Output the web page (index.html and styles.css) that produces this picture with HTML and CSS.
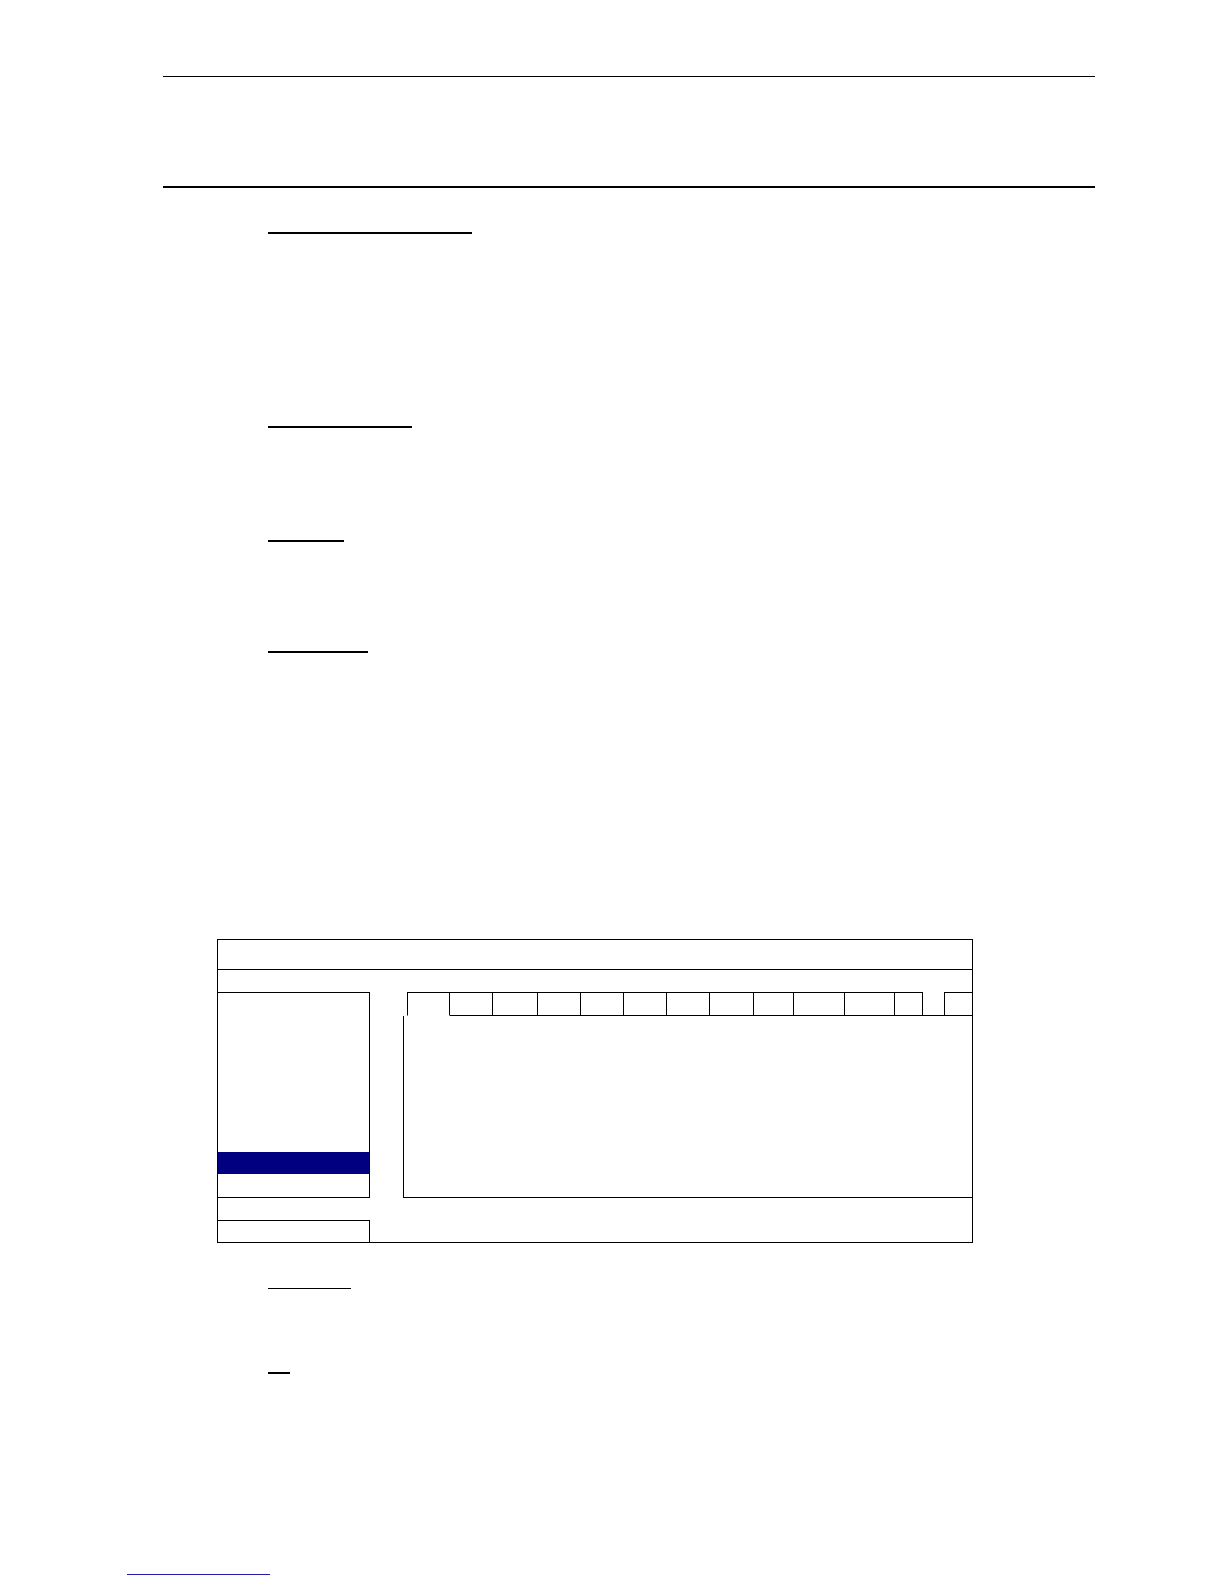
FILE: index.html
```html
<!DOCTYPE html>
<html lang="en">
<head>
<meta charset="utf-8">
<title>Manual page</title>
<link rel="stylesheet" href="styles.css">
</head>
<body>
<div class="page">
  <div class="header">
    <div class="rule-thin"></div>
    <div class="rule-thick"></div>
  </div>

  <div class="heading h1"></div>
  <div class="heading h2"></div>
  <div class="heading h3"></div>
  <div class="heading h4"></div>

  <div class="dialog">
    <div class="dlg-title"></div>
    <div class="dlg-gap"></div>
    <div class="dlg-row">
      <div class="menu-list">
        <div class="menu-item"></div>
        <div class="menu-item"></div>
        <div class="menu-item"></div>
        <div class="menu-item"></div>
        <div class="menu-item"></div>
        <div class="menu-item"></div>
        <div class="menu-item"></div>
        <div class="menu-item selected"></div>
        <div class="menu-item"></div>
      </div>
      <div class="right-col">
        <div class="tabs">
          <div class="tab active w43"></div>
          <div class="tab w43"></div>
          <div class="tab w45"></div>
          <div class="tab w43"></div>
          <div class="tab w43"></div>
          <div class="tab w43"></div>
          <div class="tab w43"></div>
          <div class="tab w44"></div>
          <div class="tab w40"></div>
          <div class="tab w51"></div>
          <div class="tab w50"></div>
          <div class="tab w28"></div>
          <div class="tab-gap"></div>
          <div class="tab last"></div>
        </div>
        <div class="panel"></div>
      </div>
    </div>
    <div class="dlg-gap"></div>
    <div class="dlg-footer">
      <div class="footer-box"></div>
    </div>
  </div>

  <div class="heading h5"></div>
  <div class="heading h6"></div>

  <div class="link-line"></div>
</div>
</body>
</html>
```

FILE: styles.css
```css
html, body {
  margin: 0;
  padding: 0;
  background: #ffffff;
  font-family: "Liberation Serif", serif;
}

.page {
  width: 1224px;
  height: 1584px;
  overflow: hidden;
}

.header {
  margin-left: 163px;
  width: 932px;
  padding-top: 76px;
}

.rule-thin {
  border-top: 1px solid #000;
}

.rule-thick {
  margin-top: 109px;
  border-top: 2px solid #000;
}

.heading {
  margin-left: 268px;
  border-top: 2px solid #000;
}

.h1 { margin-top: 44px; width: 204px; }
.h2 { margin-top: 192px; width: 144px; }
.h3 { margin-top: 112px; width: 76px; }
.h4 { margin-top: 109px; width: 100px; }
.h5 { margin-top: 45px; width: 83px; border-top-width: 1px; }
.h6 { margin-top: 83px; width: 22px; }

/* dialog */
.dialog {
  margin-top: 286px;
  margin-left: 217px;
  width: 754px;
  border: 1px solid #000;
  display: flex;
  flex-direction: column;
}

.dlg-title {
  height: 29px;
  border-bottom: 1px solid #000;
}

.dlg-gap {
  height: 22px;
}

.dlg-row {
  display: flex;
  gap: 33px;
  height: 206px;
}

.menu-list {
  width: 151px;
  border-top: 1px solid #000;
  border-right: 1px solid #000;
  border-bottom: 1px solid #000;
  padding-top: 5px;
  box-sizing: content-box;
  height: 199px;
  display: flex;
  flex-direction: column;
}

.menu-item {
  height: 22px;
  flex: none;
}

.menu-item.selected {
  background: #000080;
}

.right-col {
  width: 569px;
  display: flex;
  flex-direction: column;
}

.tabs {
  display: flex;
  padding-left: 4px;
  height: 24px;
}

.tab {
  box-sizing: border-box;
  height: 24px;
  border-top: 1px solid #000;
  border-right: 1px solid #000;
  border-bottom: 1px solid #000;
  flex: none;
}

.tab.active {
  border-left: 1px solid #000;
  border-bottom-color: transparent;
}

.w43 { width: 43px; }
.w44 { width: 44px; }
.w45 { width: 45px; }
.w40 { width: 40px; }
.w51 { width: 51px; }
.w50 { width: 50px; }
.w28 { width: 28px; }

.tab-gap {
  box-sizing: border-box;
  width: 21px;
  height: 24px;
  border-bottom: 1px solid #000;
  flex: none;
}

.tab.last {
  width: 28px;
  border-left: 1px solid #000;
  border-right: none;
}

.panel {
  box-sizing: border-box;
  height: 182px;
  border-left: 1px solid #000;
  border-bottom: 1px solid #000;
}

.dlg-footer {
  height: 22px;
}

.footer-box {
  box-sizing: border-box;
  width: 152px;
  height: 22px;
  border-top: 1px solid #000;
  border-right: 1px solid #000;
}

.link-line {
  margin-top: 200px;
  margin-left: 127px;
  width: 143px;
  border-top: 1px solid #1f1fa8;
}
```
